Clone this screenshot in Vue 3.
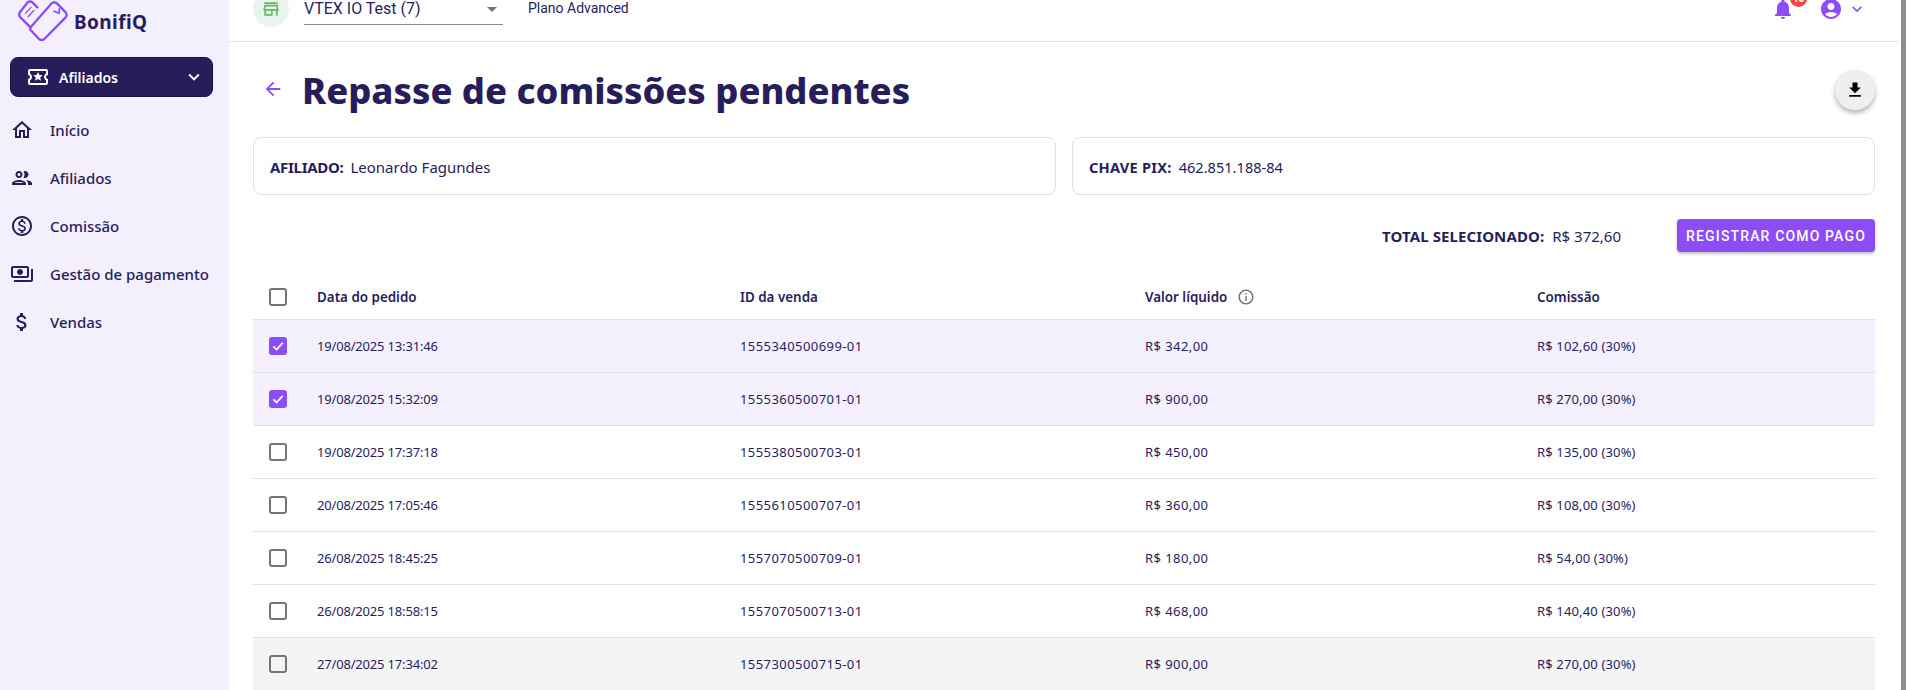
<template>
  <div class="layout">
    <aside class="sidebar">
      <div class="brand">
        <svg class="brand-logo" viewBox="54 0 153 123" fill="none" stroke="#8c4cf7" stroke-width="7" stroke-linejoin="round" stroke-linecap="round">
          <path d="M92 82 L155 10 Q163 3 171 10 L197 37 Q203 45 197 52 L133 117 Q125 123 117 117 L92 90 Q88 85 92 82 Z" />
          <path d="M112 22 L97 7 Q90 2 83 7 L61 35 Q54 44 61 52 L92 82" />
          <path d="M76 40 L93 22 M84 50 L102 31" stroke-width="4" />
          <path d="M162 34 L177 40 L178 26" stroke-width="5" />
        </svg>
        <span class="brand-name">BonifiQ</span>
      </div>
      <button class="section-btn">
        <svg class="section-icon" viewBox="0 0 24 24" fill="#fff"><path d="M22 10V6a2 2 0 0 0-2-2H4a2 2 0 0 0-2 2v4a2 2 0 0 1 0 4v4a2 2 0 0 0 2 2h16a2 2 0 0 0 2-2v-4a2 2 0 0 1 0-4Zm-2-1.46a4 4 0 0 0 0 6.92V18H4v-2.54a4 4 0 0 0 0-6.92V6h16v2.54ZM12 7l1.4 3 3.3.3-2.5 2.2.8 3.3-3-1.8-3 1.8.8-3.3-2.5-2.2 3.3-.3L12 7Z" /></svg>
        <span class="section-label">Afiliados</span>
        <svg class="section-chevron" viewBox="0 0 24 24" fill="#fff"><path d="M7.41 8.59 12 13.17l4.59-4.58L18 10l-6 6-6-6z" /></svg>
      </button>
      <nav class="nav">
        <a v-for="item in navItems" :key="item.label" class="nav-item">
          <svg class="nav-icon" viewBox="0 0 24 24" fill="#271d5b"><path :d="item.icon" /></svg>
          <span>{{ item.label }}</span>
        </a>
      </nav>
    </aside>

    <div class="main">
      <header class="topbar">
        <div class="store-badge">
          <svg viewBox="0 0 24 24" fill="#5dbb63"><path d="M18.36 9l.6 3H5.04l.6-3h12.72M20 4H4v2h16V4Zm0 3H4l-1 5v2h1v6h10v-6h4v6h2v-6h1v-2l-1-5ZM6 18v-4h6v4H6Z" /></svg>
        </div>
        <div class="store-select">
          <span>VTEX IO Test (7)</span>
          <i class="select-caret"></i>
        </div>
        <span class="plan">Plano Advanced</span>
        <div class="top-actions">
          <div class="bell">
            <svg viewBox="0 0 24 24" fill="#8c4cf7"><path d="M12 22c1.1 0 2-.9 2-2h-4c0 1.1.9 2 2 2Zm6-6v-5c0-3.07-1.63-5.64-4.5-6.32V4c0-.83-.67-1.5-1.5-1.5s-1.5.67-1.5 1.5v.68C7.64 5.36 6 7.92 6 11v5l-2 2v1h16v-1l-2-2Z" /></svg>
            <span class="bell-count">10</span>
          </div>
          <svg class="avatar" viewBox="0 0 24 24" fill="#8c4cf7"><path d="M12 2C6.48 2 2 6.48 2 12s4.48 10 10 10 10-4.48 10-10S17.52 2 12 2Zm0 4c1.93 0 3.5 1.57 3.5 3.5S13.93 13 12 13s-3.5-1.57-3.5-3.5S10.07 6 12 6Zm0 14c-2.03 0-4.43-.82-6.14-2.88C7.55 15.8 9.68 15 12 15s4.45.8 6.14 2.12C16.43 19.18 14.03 20 12 20Z" /></svg>
          <svg class="top-chevron" viewBox="0 0 24 24" fill="#8c4cf7"><path d="M7.41 8.59 12 13.17l4.59-4.58L18 10l-6 6-6-6z" /></svg>
        </div>
      </header>

      <section class="content">
        <div class="title-row">
          <svg class="back" viewBox="0 0 24 24" fill="#8c4cf7"><path d="M20 11H7.83l5.59-5.59L12 4l-8 8 8 8 1.41-1.41L7.83 13H20v-2Z" /></svg>
          <h1>Repasse de comissões pendentes</h1>
          <button class="download">
            <svg viewBox="0 0 24 24" fill="#000"><path d="M19 9h-4V3H9v6H5l7 7 7-7ZM5 18v2h14v-2H5Z" /></svg>
          </button>
        </div>

        <div class="cards">
          <div class="card"><b>AFILIADO:</b><span>Leonardo Fagundes</span></div>
          <div class="card card-pix"><b>CHAVE PIX:</b><span>462.851.188-84</span></div>
        </div>

        <div class="total-row">
          <div class="total"><b>TOTAL SELECIONADO:</b><span>R$ 372,60</span></div>
          <button class="pay-btn">REGISTRAR COMO PAGO</button>
        </div>

        <div class="table">
          <div class="row row-head">
            <div class="cell-check"><i class="check"></i></div>
            <div>Data do pedido</div>
            <div>ID da venda</div>
            <div class="head-info">
              Valor líquido
              <svg viewBox="0 0 24 24" fill="#757575"><path d="M11 7h2v2h-2V7Zm0 4h2v6h-2v-6Zm1-9C6.48 2 2 6.48 2 12s4.48 10 10 10 10-4.48 10-10S17.52 2 12 2Zm0 18c-4.41 0-8-3.59-8-8s3.59-8 8-8 8 3.59 8 8-3.59 8-8 8Z" /></svg>
            </div>
            <div>Comissão</div>
          </div>
          <div
            v-for="(row, i) in rows"
            :key="row.id"
            class="row"
            :class="{ selected: row.checked, hovered: i === rows.length - 1 }"
          >
            <div class="cell-check">
              <i class="check" :class="{ on: row.checked }">
                <svg v-if="row.checked" viewBox="0 0 24 24" fill="none" stroke="#fff" stroke-width="3"><path d="M4 12.5 9.5 18 20 6.5" /></svg>
              </i>
            </div>
            <div class="col-date">{{ row.date }}</div>
            <div class="col-id">{{ row.id }}</div>
            <div class="col-net">{{ row.net }}</div>
            <div class="col-fee">{{ row.fee }}</div>
          </div>
        </div>
      </section>
    </div>
    <div class="scrollbar"></div>
  </div>
</template>

<script setup>
const navItems = [
  { label: "Início", icon: "M12 5.69 17 10.19V18h-2v-6H9v6H7v-7.81l5-4.5M12 3 2 12h3v8h6v-6h2v6h6v-8h3L12 3Z" },
  { label: "Afiliados", icon: "M9 12c1.93 0 3.5-1.57 3.5-3.5S10.93 5 9 5 5.5 6.57 5.5 8.5 7.07 12 9 12Zm0-5c.83 0 1.5.67 1.5 1.5S9.83 10 9 10s-1.5-.67-1.5-1.5S8.17 7 9 7Zm0 7c-2.34 0-7 1.17-7 3.5V19h14v-1.5c0-2.33-4.66-3.5-7-3.5Zm-4.66 3c.84-.58 2.87-1 4.66-1s3.82.42 4.66 1H4.34ZM15 12c1.93 0 3.5-1.57 3.5-3.5S16.93 5 15 5c-.54 0-1.04.13-1.5.35.63.89 1 1.98 1 3.15s-.37 2.26-1 3.15c.46.22.96.35 1.5.35Zm1 2.05c1.19.86 2 2 2 3.45V19h4v-1.5c0-2-3.5-3.2-6-3.45Z" },
  { label: "Comissão", icon: "M12 2C6.48 2 2 6.48 2 12s4.48 10 10 10 10-4.48 10-10S17.52 2 12 2Zm0 18c-4.41 0-8-3.59-8-8s3.59-8 8-8 8 3.59 8 8-3.59 8-8 8Zm.31-8.86c-1.77-.45-2.34-.94-2.34-1.67 0-.84.79-1.43 2.1-1.43 1.38 0 1.9.66 1.94 1.64h1.71c-.05-1.34-.87-2.57-2.49-2.97V5H10.9v1.69c-1.51.32-2.72 1.3-2.72 2.81 0 1.79 1.49 2.69 3.66 3.21 1.95.46 2.34 1.15 2.34 1.87 0 .53-.39 1.39-2.1 1.39-1.6 0-2.23-.72-2.32-1.64H8.04c.1 1.7 1.36 2.66 2.86 2.97V19h2.34v-1.67c1.52-.29 2.72-1.16 2.73-2.77-.01-2.2-1.9-2.96-3.66-3.42Z" },
  { label: "Gestão de pagamento", icon: "M19 14V6c0-1.1-.9-2-2-2H3c-1.1 0-2 .9-2 2v8c0 1.1.9 2 2 2h14c1.1 0 2-.9 2-2Zm-2 0H3V6h14v8Zm-7-7c-1.66 0-3 1.34-3 3s1.34 3 3 3 3-1.34 3-3-1.34-3-3-3Zm13 0v11c0 1.1-.9 2-2 2H4v-2h17V7h2Z" },
  { label: "Vendas", icon: "M11.8 10.9c-2.27-.59-3-1.2-3-2.15 0-1.09 1.01-1.85 2.7-1.85 1.78 0 2.44.85 2.5 2.1h2.21c-.07-1.72-1.12-3.3-3.21-3.81V3h-3v2.16c-1.94.42-3.5 1.68-3.5 3.61 0 2.31 1.91 3.46 4.7 4.13 2.5.6 3 1.48 3 2.41 0 .69-.49 1.79-2.7 1.79-2.06 0-2.87-.92-2.98-2.1h-2.2c.12 2.19 1.76 3.42 3.68 3.83V21h3v-2.15c1.95-.37 3.5-1.5 3.5-3.55 0-2.84-2.43-3.81-4.7-4.4Z" },
];

const rows = [
  { date: "19/08/2025 13:31:46", id: "1555340500699-01", net: "R$ 342,00", fee: "R$ 102,60 (30%)", checked: true },
  { date: "19/08/2025 15:32:09", id: "1555360500701-01", net: "R$ 900,00", fee: "R$ 270,00 (30%)", checked: true },
  { date: "19/08/2025 17:37:18", id: "1555380500703-01", net: "R$ 450,00", fee: "R$ 135,00 (30%)", checked: false },
  { date: "20/08/2025 17:05:46", id: "1555610500707-01", net: "R$ 360,00", fee: "R$ 108,00 (30%)", checked: false },
  { date: "26/08/2025 18:45:25", id: "1557070500709-01", net: "R$ 180,00", fee: "R$ 54,00 (30%)", checked: false },
  { date: "26/08/2025 18:58:15", id: "1557070500713-01", net: "R$ 468,00", fee: "R$ 140,40 (30%)", checked: false },
  { date: "27/08/2025 17:34:02", id: "1557300500715-01", net: "R$ 900,00", fee: "R$ 270,00 (30%)", checked: false },
];
</script>

<style>
html,
body {
  margin: 0;
  overflow: hidden;
}
</style>

<style scoped>
.layout {
  display: flex;
  height: 690px;
  overflow: hidden;
  font-family: "Noto Sans", sans-serif;
  color: #271d5b;
  background: #fff;
}

.sidebar {
  width: 229px;
  flex-shrink: 0;
  background: #f3effd;
}

.brand {
  height: 41px;
  display: flex;
  align-items: center;
  padding-left: 18px;
  gap: 5px;
}

.brand-logo {
  width: 51px;
  height: 41px;
}

.brand-name {
  margin-top: 3px;
  font-size: 19px;
  font-weight: 700;
  letter-spacing: 0.4px;
}

.section-btn {
  display: flex;
  align-items: center;
  width: 203px;
  height: 40px;
  margin: 16px 0 0 10px;
  padding: 0 7px 0 15px;
  border: 1px solid #1a1340;
  border-radius: 8px;
  background: #271d5b;
  color: #fff;
  font-family: inherit;
  font-size: 14px;
  font-weight: 600;
  box-sizing: border-box;
}

.section-icon {
  width: 24px;
  height: 24px;
  margin-right: 9px;
}

.section-label {
  flex: 1;
  text-align: left;
}

.section-chevron {
  width: 22px;
  height: 22px;
}

.nav {
  display: flex;
  flex-direction: column;
  margin-top: 9px;
}

.nav-item {
  display: flex;
  align-items: center;
  height: 48px;
  padding-left: 10px;
  gap: 16px;
  font-size: 15px;
  font-weight: 500;
}

.nav-icon {
  width: 24px;
  height: 24px;
}

.main {
  flex: 1;
  min-width: 0;
  display: flex;
  flex-direction: column;
}

.topbar {
  height: 41px;
  flex-shrink: 0;
  display: flex;
  align-items: flex-start;
  border-bottom: 1px solid #e0e0e0;
  margin-right: 8px;
  padding-left: 24px;
}

.store-badge {
  width: 36px;
  height: 36px;
  margin-top: -9px;
  border-radius: 50%;
  background: #e9f5ec;
  display: flex;
  align-items: center;
  justify-content: center;
}

.store-badge svg {
  width: 20px;
  height: 20px;
}

.store-select {
  width: 199px;
  height: 24px;
  margin-left: 15px;
  display: flex;
  justify-content: space-between;
  align-items: flex-start;
  border-bottom: 1px solid #8a8a8a;
  font-family: Roboto, sans-serif;
  font-size: 16px;
  line-height: 18px;
}

.select-caret {
  width: 0;
  height: 0;
  margin: 7px 6px 0 0;
  border-left: 5px solid transparent;
  border-right: 5px solid transparent;
  border-top: 5px solid #757575;
}

.plan {
  margin-left: 25px;
  font-family: Roboto, sans-serif;
  font-size: 14px;
  line-height: 16px;
}

.top-actions {
  margin-left: auto;
  display: flex;
  align-items: flex-start;
  padding-right: 31px;
}

.bell {
  position: relative;
  width: 24px;
  height: 22px;
}

.bell svg {
  width: 24px;
  height: 24px;
  margin-top: -3px;
  display: block;
}

.bell-count {
  position: absolute;
  top: -10px;
  left: 19px;
  width: 17px;
  height: 17px;
  border-radius: 50%;
  background: #f44545;
  color: #fff;
  font-size: 10px;
  font-weight: 700;
  text-align: center;
  line-height: 17px;
}

.avatar {
  width: 24px;
  height: 24px;
  margin: -3px 0 0 24px;
}

.top-chevron {
  width: 20px;
  height: 20px;
  margin: -1px 0 0 4px;
}

.content {
  padding: 0 0 0 24px;
  margin-right: 31px;
}

.title-row {
  display: flex;
  align-items: center;
  height: 95px;
}

.back {
  width: 22px;
  height: 22px;
  margin: -2px 0 0 9px;
}

h1 {
  margin: 0 0 0 18px;
  font-size: 36.3px;
  font-weight: 800;
  line-height: 44px;
}

.download {
  margin: 0 0 0 auto;
  width: 40px;
  height: 40px;
  padding: 0;
  border: none;
  border-radius: 50%;
  background: #efefef;
  box-shadow: 0 3px 5px rgba(0, 0, 0, 0.3);
  display: flex;
  align-items: center;
  justify-content: center;
}

.download svg {
  width: 20px;
  height: 20px;
}

.cards {
  display: grid;
  grid-template-columns: 1fr 1fr;
  gap: 16px;
}

.card {
  height: 58px;
  box-sizing: border-box;
  display: flex;
  align-items: center;
  gap: 7px;
  padding: 2px 0 0 16px;
  border: 1px solid #e0e0e0;
  border-radius: 8px;
  font-size: 15px;
}

.card b {
  font-weight: 700;
  letter-spacing: -0.3px;
}

.card-pix {
  font-size: 14.6px;
}

.card-pix b {
  letter-spacing: 0.25px;
}

.total b {
  font-weight: 700;
  letter-spacing: 0.1px;
}

.total-row {
  display: flex;
  align-items: center;
  justify-content: flex-end;
  height: 33px;
  margin-top: 24px;
}

.total {
  display: flex;
  gap: 8px;
  font-size: 15px;
  margin-right: 56px;
}

.pay-btn {
  width: 198px;
  height: 33px;
  padding: 0;
  border: none;
  border-radius: 4px;
  background: #8c4cf7;
  color: #fff;
  font-family: Roboto, sans-serif;
  font-size: 14px;
  font-weight: 500;
  letter-spacing: 1.15px;
  box-shadow: 0 2px 3px rgba(0, 0, 0, 0.25);
}

.table {
  margin-top: 22px;
  font-size: 13px;
}

.row {
  display: grid;
  grid-template-columns: 64px 423px 405px 392px 1fr;
  align-items: center;
  height: 53px;
  box-sizing: border-box;
  border-bottom: 1px solid #e0e0e0;
}

.row-head {
  height: 46px;
  font-size: 13.4px;
  font-weight: 600;
}

.col-date {
  letter-spacing: -0.18px;
}

.col-id,
.col-net {
  letter-spacing: 0.43px;
}

.col-fee {
  letter-spacing: 0.15px;
}

.selected {
  background: #f4f0fe;
}

.hovered {
  background: #f4f4f4;
}

.cell-check {
  display: flex;
  padding-left: 16px;
}

.check {
  width: 14px;
  height: 14px;
  border: 2px solid #757575;
  border-radius: 3px;
  display: block;
}

.check.on {
  background: #8c4cf7;
  border-color: #8c4cf7;
}

.check svg {
  display: block;
  width: 14px;
  height: 14px;
}

.head-info {
  display: flex;
  align-items: center;
  gap: 10px;
}

.head-info svg {
  width: 18px;
  height: 18px;
}

.scrollbar {
  position: absolute;
  right: 0;
  top: 0;
  width: 5px;
  height: 690px;
  background: #8f8f8f;
}
</style>
